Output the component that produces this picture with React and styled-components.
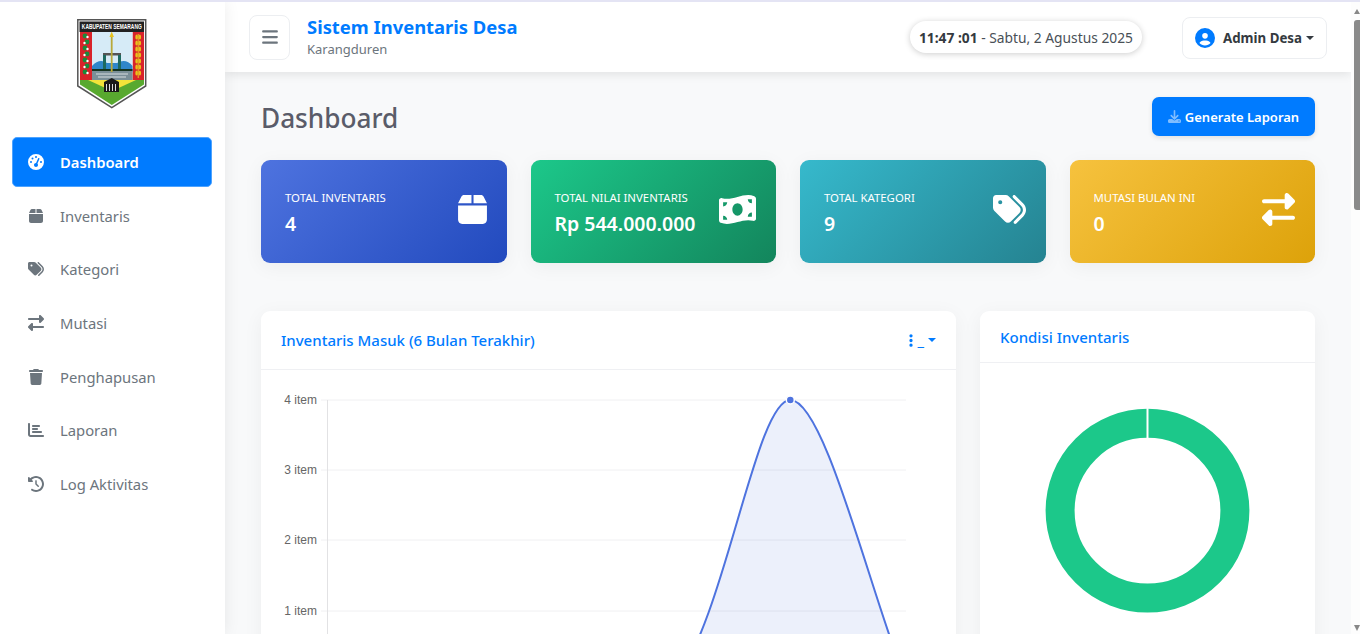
import React from "react";
import styled, { createGlobalStyle } from "styled-components";
import {
  FaBars,
  FaBox,
  FaChartBar,
  FaCircleUser,
  FaClockRotateLeft,
  FaDownload,
  FaEllipsisVertical,
  FaGaugeHigh,
  FaMoneyBillWave,
  FaRightLeft,
  FaTags,
  FaTrash,
} from "react-icons/fa6";

const FONT = `"Noto Sans", "Open Sans", sans-serif`;

const GlobalStyle = createGlobalStyle`
  html, body {
    margin: 0;
    height: 634px;
    overflow: hidden;
    background: #f8f9fa;
    font-family: ${FONT};
  }
  * { box-sizing: border-box; }
`;

const Page = styled.div`
  display: flex;
  width: 1360px;
  height: 634px;
  overflow: hidden;
  border-top: 2px solid #e4e4f4;
`;

const Sidebar = styled.aside`
  flex: 0 0 225px;
  background: #fff;
  box-shadow: 0 0 15px rgba(0, 0, 0, 0.08);
  z-index: 2;
  padding: 0 13px 0 12px;
`;

const LogoWrap = styled.div`
  display: flex;
  justify-content: center;
  height: 135.3px;
  padding-top: 17px;
`;

const NavList = styled.nav`
  display: flex;
  flex-direction: column;
  gap: 4px;
`;

const NavItem = styled.a`
  display: flex;
  align-items: center;
  height: 49.67px;
  padding-left: ${(p) => (p.$active ? 13 : 14)}px;
  border-radius: 5px;
  font-size: 14.8px;
  color: ${(p) => (p.$active ? "#fff" : "#6c757d")};
  font-weight: ${(p) => (p.$active ? 600 : 400)};
  background: ${(p) => (p.$active ? "#007bff" : "transparent")};
  border: ${(p) => (p.$active ? "1px solid #4da3ff" : "none")};

  svg {
    width: 20px;
    height: 16px;
    margin-right: 14px;
  }
`;

const Main = styled.main`
  flex: 1;
  min-width: 0;
  display: flex;
  flex-direction: column;
`;

const Topbar = styled.header`
  flex: 0 0 70px;
  display: flex;
  align-items: center;
  background: #fff;
  box-shadow: 0 2px 10px rgba(0, 0, 0, 0.1);
  padding: 0 24px;
  z-index: 1;
`;

const MenuButton = styled.button`
  width: 41px;
  height: 45px;
  border: 1px solid #eceef1;
  border-radius: 8px;
  background: #fff;
  color: #6c757d;
  display: flex;
  align-items: center;
  justify-content: center;
  padding: 0;
  margin-right: 17px;

  svg {
    width: 16px;
    height: 18px;
  }
`;

const Brand = styled.div`
  display: flex;
  flex-direction: column;
  flex: 1;
  padding-bottom: 2px;
`;

const BrandTitle = styled.div`
  font-size: 18.4px;
  line-height: 26px;
  font-weight: 700;
  color: #007bff;
`;

const BrandSub = styled.div`
  font-size: 13px;
  line-height: 18px;
  color: #6c757d;
`;

const Clock = styled.div`
  height: 32px;
  display: flex;
  align-items: center;
  padding: 0 9px;
  border-radius: 16px;
  background: #fff;
  box-shadow: 0 1px 6px rgba(0, 0, 0, 0.2);
  font-size: 13.8px;
  color: #495057;
  margin-right: 40px;
  white-space: pre;

  b {
    color: #343a40;
  }
`;

const UserButton = styled.div`
  width: 145px;
  height: 42px;
  margin-top: 2px;
  display: flex;
  align-items: center;
  justify-content: center;
  border: 1px solid #eceef1;
  border-radius: 8px;
  font-size: 13.3px;
  font-weight: 700;
  color: #343a40;

  svg {
    width: 20px;
    height: 20px;
    color: #007bff;
    margin-right: 8px;
  }
`;

const Caret = styled.span`
  display: inline-block;
  margin-left: 4px;
  border-top: 4px solid currentColor;
  border-left: 4px solid transparent;
  border-right: 4px solid transparent;
`;

const Content = styled.div`
  flex: 1;
  padding: 25px 36px 0 36px;
  overflow: hidden;
`;

const PageHead = styled.div`
  display: flex;
  justify-content: space-between;
  align-items: center;
  height: 39px;
  margin-bottom: 24px;
`;

const PageTitle = styled.h1`
  margin: 0;
  padding-top: 2px;
  font-size: 26.2px;
  font-weight: 500;
  color: #5a5c69;
`;

const GenerateButton = styled.button`
  width: 163px;
  height: 39px;
  border: none;
  border-radius: 7px;
  background: #007bff;
  color: #fff;
  font-family: ${FONT};
  font-size: 13px;
  font-weight: 600;
  display: flex;
  align-items: center;
  justify-content: center;
  box-shadow: 0 2px 5px rgba(0, 0, 0, 0.1);

  svg {
    width: 13px;
    height: 13px;
    margin-right: 4px;
    opacity: 0.5;
  }
`;

const StatGrid = styled.div`
  display: grid;
  grid-template-columns: repeat(4, 1fr);
  gap: 24px;
  margin-bottom: 48px;
`;

const StatCard = styled.div`
  height: 103px;
  border-radius: 9px;
  padding: 0 20px 0 24px;
  display: flex;
  align-items: center;
  justify-content: space-between;
  color: #fff;
  background: linear-gradient(135deg, ${(p) => p.$from}, ${(p) => p.$to});
  box-shadow: 0 4px 20px rgba(0, 0, 0, 0.05);
`;

const StatText = styled.div`
  padding-top: 3px;
`;

const StatLabel = styled.div`
  font-size: 11.4px;
  line-height: 17px;
  margin-bottom: 4px;
`;

const StatValue = styled.div`
  font-size: 19.5px;
  line-height: 28px;
  font-weight: 600;
`;

const StatIcon = styled.div`
  display: flex;
  margin-bottom: 4px;

  svg {
    width: ${(p) => p.$width}px;
    height: 33px;
  }
`;

const ChartRow = styled.div`
  display: grid;
  grid-template-columns: 695px 335px;
  gap: 24px;
`;

const Card = styled.section`
  background: #fff;
  border-radius: 9px;
  height: 500px;
  box-shadow: 0 4px 20px rgba(0, 0, 0, 0.05);
`;

const CardHeader = styled.div`
  height: ${(p) => p.$height}px;
  display: flex;
  align-items: center;
  justify-content: space-between;
  padding: 0 20px;
  border-bottom: 1px solid #eff0f3;
  font-size: 15px;
  font-weight: 500;
  color: #007bff;
`;

const CardTools = styled.div`
  display: flex;
  align-items: center;
  color: #007bff;

  svg {
    width: 12px;
    height: 15px;
  }
`;

const ChartSvg = styled.svg`
  display: block;
`;

const ScrollTrack = styled.div`
  flex: 0 0 9px;
  display: flex;
  flex-direction: column;
  padding: 7px 0 3px 3px;
  background: #fdfdfd;
  z-index: 3;
`;

const ScrollArrow = styled.span`
  width: 6px;
  height: 0;
  border-left: 3px solid transparent;
  border-right: 3px solid transparent;
  ${(p) => (p.$down ? "border-top: 6px solid #888; margin-top: auto;" : "border-bottom: 5px solid #888;")}
`;

const ScrollThumb = styled.span`
  width: 6px;
  height: 190px;
  margin-top: 6px;
  border-radius: 3px 0 0 3px;
  background: #8a8a8a;
`;

// same bezier the chart lib draws for a 0,4,0 run; runs below the card fold
const CURVE = "M413.6 311 C463.9 249.9 494.6 30 529.3 30 C564 30 610.3 226.7 645 311";

const AreaChart = () => (
  <ChartSvg width="695" height="264" viewBox="0 0 695 264">
    {[30, 100, 170, 241].map((y) => (
      <line key={y} x1="60" x2="645" y1={y} y2={y} stroke="#f0f0f2" />
    ))}
    <line x1="66.5" x2="66.5" y1="30" y2="264" stroke="#e2e2e4" />
    {[
      [30, "4 item"],
      [100, "3 item"],
      [170, "2 item"],
      [241, "1 item"],
    ].map(([y, label]) => (
      <text key={y} x="56" y={y + 4} textAnchor="end" fontFamily="Liberation Sans" fontSize="12" fill="#666">
        {label}
      </text>
    ))}
    <path d={`${CURVE} Z`} fill="rgba(78,115,223,0.11)" />
    <path d={CURVE} fill="none" stroke="#4e73df" strokeWidth="2" />
    <circle cx="529.3" cy="30" r="4" fill="#4e73df" stroke="#fff" strokeWidth="1.5" />
  </ChartSvg>
);

const Donut = () => (
  <ChartSvg width="335" height="300" viewBox="0 0 335 300">
    <circle cx="167.5" cy="147.7" r="87.4" fill="none" stroke="#1cc88a" strokeWidth="29" />
    <line x1="167.5" x2="167.5" y1="45" y2="76" stroke="#fff" strokeWidth="2" />
  </ChartSvg>
);

const Logo = () => (
  <svg width="70" height="90" viewBox="0 0 70 90">
    <path d="M.8 .8H68.7V67L34.8 88.6L.8 67Z" fill="#fff" stroke="#555" strokeWidth="1.5" />
    <rect x="2.5" y="2.5" width="64.5" height="10.5" fill="#222" />
    <text
      transform="translate(34.8 10.4) scale(1 1.3)"
      textAnchor="middle"
      fontFamily="Liberation Sans"
      fontWeight="700"
      fontSize="4.9"
      fill="#fff"
    >
      KABUPATEN SEMARANG
    </text>
    <rect x="3" y="13" width="12" height="48" fill="#d8232a" />
    <rect x="55.5" y="13" width="11.5" height="48" fill="#d8232a" />
    <rect x="15" y="13" width="40.5" height="40" fill="#d6ebf7" />
    <path d="M15 47 C20 41 26 41 30 44 L40 44 C45 41 51 41 55.5 47 V53 H15Z" fill="#2f86c9" />
    <rect x="15" y="50" width="40.5" height="2" fill="#15331f" />
    <rect x="15" y="52" width="40.5" height="9" fill="#7a8f98" />
    <path d="M19 55H51M21 58H49" stroke="#d8dee0" strokeWidth="1" />
    <path d="M26 34H44V36.5H26Z" fill="#555" />
    <path d="M27.5 36V50M42.5 36V50" stroke="#1d6a60" strokeWidth="3" />
    <rect x="33.8" y="17" width="1.8" height="36" fill="#b8a93a" />
    <path d="M34.7 12.5L36.9 18H32.5Z" fill="#e8c21c" />
    {[17, 23, 29, 35, 41, 47, 53].map((y, i) => (
      <g key={y}>
        <circle cx={i % 2 ? 10 : 8} cy={y} r="2.4" fill="#1b8a3a" />
        <circle cx={i % 2 ? 7.5 : 10.5} cy={y + 1} r="1.2" fill="#fff" />
      </g>
    ))}
    <path d="M61.2 15V59" stroke="#e8c21c" strokeWidth="1" />
    {[18, 24, 30, 36, 42, 48, 54].map((y) => (
      <g key={y} fill="#e8c21c">
        <ellipse cx="59.6" cy={y} rx="1.3" ry="2.6" />
        <ellipse cx="62.8" cy={y} rx="1.3" ry="2.6" />
      </g>
    ))}
    <path d="M3 61H67V65.5L34.8 86L3 65.5Z" fill="#58a92f" />
    <path d="M11 61H59L35 72Z" fill="#f2e33a" />
    <path d="M27 73V63L34.8 59L42 63V73Z" fill="#1a1a1a" />
    <path d="M29.5 65V72M32.5 65V72M35.5 65V72M38.5 65V72" stroke="#ddd" strokeWidth="1" />
  </svg>
);

const NAV = [
  { label: "Dashboard", Icon: FaGaugeHigh, active: true },
  { label: "Inventaris", Icon: FaBox },
  { label: "Kategori", Icon: FaTags },
  { label: "Mutasi", Icon: FaRightLeft },
  { label: "Penghapusan", Icon: FaTrash },
  { label: "Laporan", Icon: FaChartBar },
  { label: "Log Aktivitas", Icon: FaClockRotateLeft },
];

const STATS = [
  { label: "TOTAL INVENTARIS", value: "4", Icon: FaBox, width: 29, from: "#4e73df", to: "#224abe" },
  { label: "TOTAL NILAI INVENTARIS", value: "Rp 544.000.000", Icon: FaMoneyBillWave, width: 37, from: "#1cc88a", to: "#13855c" },
  { label: "TOTAL KATEGORI", value: "9", Icon: FaTags, width: 33, from: "#36b9cc", to: "#258391" },
  { label: "MUTASI BULAN INI", value: "0", Icon: FaRightLeft, width: 33, from: "#f6c23e", to: "#dda20a" },
];

const App = () => (
  <Page>
    <GlobalStyle />
    <Sidebar>
      <LogoWrap>
        <Logo />
      </LogoWrap>
      <NavList>
        {NAV.map(({ label, Icon, active }) => (
          <NavItem key={label} $active={active}>
            <Icon />
            {label}
          </NavItem>
        ))}
      </NavList>
    </Sidebar>
    <Main>
      <Topbar>
        <MenuButton>
          <FaBars />
        </MenuButton>
        <Brand>
          <BrandTitle>Sistem Inventaris Desa</BrandTitle>
          <BrandSub>Karangduren</BrandSub>
        </Brand>
        <Clock>
          <b>11:47 :01</b> - Sabtu, 2 Agustus 2025
        </Clock>
        <UserButton>
          <FaCircleUser />
          Admin Desa
          <Caret />
        </UserButton>
      </Topbar>
      <Content>
        <PageHead>
          <PageTitle>Dashboard</PageTitle>
          <GenerateButton>
            <FaDownload />
            Generate Laporan
          </GenerateButton>
        </PageHead>
        <StatGrid>
          {STATS.map(({ label, value, Icon, width, from, to }) => (
            <StatCard key={label} $from={from} $to={to}>
              <StatText>
                <StatLabel>{label}</StatLabel>
                <StatValue>{value}</StatValue>
              </StatText>
              <StatIcon $width={width}>
                <Icon />
              </StatIcon>
            </StatCard>
          ))}
        </StatGrid>
        <ChartRow>
          <Card>
            <CardHeader $height={59}>
              Inventaris Masuk (6 Bulan Terakhir)
              <CardTools>
                <FaEllipsisVertical />
                <span>_</span>
                <Caret />
              </CardTools>
            </CardHeader>
            <AreaChart />
          </Card>
          <Card>
            <CardHeader $height={52}>Kondisi Inventaris</CardHeader>
            <Donut />
          </Card>
        </ChartRow>
      </Content>
    </Main>
    <ScrollTrack>
      <ScrollArrow />
      <ScrollThumb />
      <ScrollArrow $down />
    </ScrollTrack>
  </Page>
);

export default App;
